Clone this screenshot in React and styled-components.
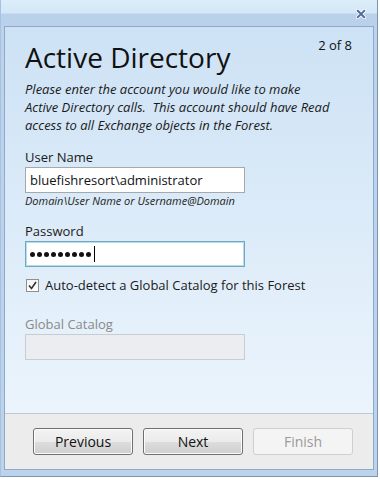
import React from "react"
import styled, { createGlobalStyle } from "styled-components"

const GlobalStyle = createGlobalStyle`
	html, body {
		margin: 0;
		padding: 0;
		background: #ffffff;
	}
	body {
		font-family: "Open Sans", "DejaVu Sans", sans-serif;
		color: #1a1a1a;
	}
`

const Window = styled.div`
	width: 378px;
	height: 477px;
	box-sizing: border-box;
	display: flex;
	flex-direction: column;
	background: #bdd3ec;
	border-left: 1px solid #a6c2e2;
	border-right: 1px solid #7d95b5;
	border-bottom: 1px solid #7d95b5;
`

const TitleBar = styled.div`
	height: 26px;
	flex-shrink: 0;
	display: flex;
	justify-content: flex-end;
	align-items: flex-start;
	padding: 9px 11px 0 0;
	box-sizing: border-box;
	background: linear-gradient(to bottom, #dcedf9 0px, #d3e7f7 13px, #bad1eb 14px, #bad1eb 26px);
`

const CloseButton = styled.button`
	border: 0;
	background: none;
	padding: 0;
	width: 10px;
	height: 10px;
	cursor: pointer;
	svg {
		display: block;
	}
`

const Panel = styled.div`
	flex: 1;
	margin: 0 3px 6px 3px;
	border: 1px solid #8ea9c9;
	display: flex;
	flex-direction: column;
	min-height: 0;
`

const Content = styled.div`
	flex: 1;
	padding: 6px 21px 0 20px;
	background: linear-gradient(to bottom, #cde2f5 0%, #ebf4fc 100%);
`

const Header = styled.div`
	display: flex;
	justify-content: space-between;
	align-items: flex-start;
`

const Title = styled.h1`
	margin: 6px 0 0 0;
	font-size: 28px;
	font-weight: normal;
	line-height: 36px;
	color: #111111;
`

const Step = styled.span`
	font-size: 13px;
	line-height: 18px;
	margin-top: 3px;
	color: #111111;
`

const Intro = styled.p`
	margin: 5px 0 0 0;
	font-size: 13px;
	line-height: 18px;
	font-style: italic;
	color: #1a1a1a;
	white-space: nowrap;
`

const Field = styled.div`
	display: flex;
	flex-direction: column;
	margin-top: ${(p) => p.$top}px;
`

const Label = styled.label`
	font-size: 13px;
	line-height: 16px;
	color: ${(p) => (p.$disabled ? "#8a8a8a" : "#1a1a1a")};
	margin-bottom: 2px;
`

const Input = styled.div`
	width: 220px;
	height: 26px;
	box-sizing: border-box;
	display: flex;
	align-items: center;
	padding: 0 4px;
	background: ${(p) => (p.$disabled ? "#ebedf0" : "#ffffff")};
	border: 1px solid ${(p) => (p.$focused ? "#6ea9c4" : p.$disabled ? "#c9cdd2" : "#a5a9ae")};
	box-shadow: ${(p) => (p.$focused ? "inset 0 0 0 1px #b9dcea" : "none")};
	font-size: 13px;
	color: #111111;
`

const Dot = styled.span`
	width: 5px;
	height: 5px;
	border-radius: 50%;
	background: #111111;
	margin-right: 2px;
	flex-shrink: 0;
`

const Caret = styled.span`
	width: 1px;
	height: 16px;
	background: #000000;
	margin-left: 1px;
`

const Hint = styled.span`
	font-size: 11px;
	font-style: italic;
	line-height: 13px;
	margin-top: 1px;
	color: #222222;
`

const CheckRow = styled.label`
	display: flex;
	align-items: center;
	gap: 6px;
	margin-top: 9px;
	font-size: 13px;
	line-height: 18px;
	color: #1a1a1a;
`

const Box = styled.span`
	width: 13px;
	height: 13px;
	box-sizing: border-box;
	border: 1px solid #8e8f8f;
	background: linear-gradient(to bottom, #f4f4f4, #ffffff);
	display: flex;
	align-items: center;
	justify-content: center;
	margin-left: 1px;
`

const Footer = styled.div`
	height: 56px;
	flex-shrink: 0;
	box-sizing: border-box;
	border-top: 1px solid #c3c8ce;
	background: #ececec;
	display: flex;
	justify-content: flex-end;
	align-items: center;
	gap: 10px;
	padding: 0 20px 0 0;
`

const Button = styled.button`
	width: 100px;
	height: 27px;
	box-sizing: border-box;
	border-radius: 3px;
	border: 1px solid ${(p) => (p.disabled ? "#cfcfcf" : "#707070")};
	background: ${(p) =>
		p.disabled
			? "#f4f4f4"
			: "linear-gradient(to bottom, #f3f3f3 0%, #ebebeb 50%, #dddddd 51%, #cfcfcf 100%)"};
	font-family: "Open Sans", "DejaVu Sans", sans-serif;
	font-size: 14px;
	color: ${(p) => (p.disabled ? "#9a9a9a" : "#111111")};
	padding: 0;
	box-shadow: ${(p) => (p.disabled ? "none" : "inset 0 0 0 1px #fcfcfc")};
`

export default function App() {
	return (
		<>
			<GlobalStyle />
			<Window>
				<TitleBar>
					<CloseButton aria-label="Close">
						<svg width="10" height="10" viewBox="0 0 10 10">
							<path d="M1.5 1.5 L8.5 8.5 M8.5 1.5 L1.5 8.5" stroke="#ffffff" strokeWidth="3.6" strokeLinecap="square" />
							<path d="M1.8 1.8 L8.2 8.2 M8.2 1.8 L1.8 8.2" stroke="#4d6e97" strokeWidth="2" strokeLinecap="square" />
						</svg>
					</CloseButton>
				</TitleBar>
				<Panel>
					<Content>
						<Header>
							<Title>Active Directory</Title>
							<Step>2 of 8</Step>
						</Header>
						<Intro>
							Please enter the account you would like to make
							<br />
							Active Directory calls.&nbsp; This account should have Read
							<br />
							access to all Exchange objects in the Forest.
						</Intro>

						<Field $top={15}>
							<Label>User Name</Label>
							<Input>bluefishresort\administrator</Input>
							<Hint>Domain\User Name or Username@Domain</Hint>
						</Field>

						<Field $top={16}>
							<Label>Password</Label>
							<Input $focused>
								{Array.from({ length: 9 }, (_, i) => (
									<Dot key={i} />
								))}
								<Caret />
							</Input>
						</Field>

						<CheckRow>
							<Box>
								<svg width="9" height="9" viewBox="0 0 9 9">
									<path d="M1 4.5 L3.5 7.5 L8 1" fill="none" stroke="#333333" strokeWidth="1.6" />
								</svg>
							</Box>
							Auto-detect a Global Catalog for this Forest
						</CheckRow>

						<Field $top={22}>
							<Label $disabled>Global Catalog</Label>
							<Input $disabled />
						</Field>
					</Content>
					<Footer>
						<Button>Previous</Button>
						<Button>Next</Button>
						<Button disabled>Finish</Button>
					</Footer>
				</Panel>
			</Window>
		</>
	)
}
